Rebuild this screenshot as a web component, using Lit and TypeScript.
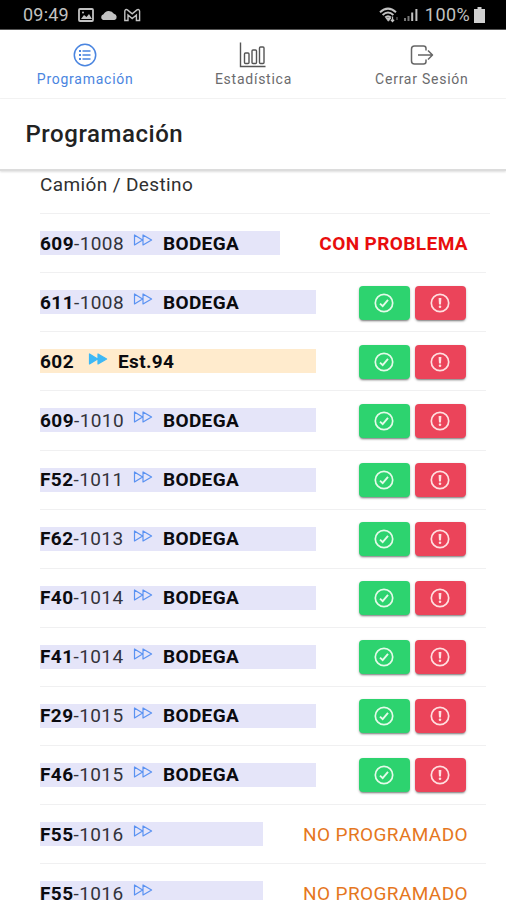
import { LitElement, html, css, svg, nothing } from "lit";
import { customElement, property } from "lit/decorators.js";

type Kind = "actions" | "problem" | "unscheduled";

interface Trip {
  truck: string;
  load?: string;
  target?: string;
  kind: Kind;
  warm?: boolean;
}

const trips: Trip[] = [
  { truck: "609", load: "-1008", target: "BODEGA", kind: "problem" },
  { truck: "611", load: "-1008", target: "BODEGA", kind: "actions" },
  { truck: "602", target: "Est.94", kind: "actions", warm: true },
  { truck: "609", load: "-1010", target: "BODEGA", kind: "actions" },
  { truck: "F52", load: "-1011", target: "BODEGA", kind: "actions" },
  { truck: "F62", load: "-1013", target: "BODEGA", kind: "actions" },
  { truck: "F40", load: "-1014", target: "BODEGA", kind: "actions" },
  { truck: "F41", load: "-1014", target: "BODEGA", kind: "actions" },
  { truck: "F29", load: "-1015", target: "BODEGA", kind: "actions" },
  { truck: "F46", load: "-1015", target: "BODEGA", kind: "actions" },
  { truck: "F55", load: "-1016", kind: "unscheduled" },
  { truck: "F55", load: "-1016", kind: "unscheduled" },
];

const ring = svg`<circle cx="10" cy="10" r="8.7" fill="none" stroke="currentColor" stroke-width="1.7"/>`;
const checkIcon = html`<svg width="20" height="20" viewBox="0 0 20 20">${ring}<path d="M6 10.6 8.7 13.2 14 6.9" fill="none" stroke="currentColor" stroke-width="1.9"/></svg>`;
const alertIcon = html`<svg width="20" height="20" viewBox="0 0 20 20">${ring}<path d="M8.600 5h2.800l-.4 6.400H9z" fill="currentColor"/><circle cx="10" cy="13.8" r="1.3" fill="currentColor"/></svg>`;

@customElement("trip-row")
export class TripRow extends LitElement {
  @property({ attribute: false }) trip!: Trip;

  static styles = css`
    :host { display: block; flex: none; height: 59.08px; box-sizing: border-box; padding-left: 40px; }
    .row { display: flex; align-items: center; height: 100%; width: 446px; box-sizing: border-box; border-bottom: 1px solid #f0f0f1; }
    .bar { display: flex; align-items: center; height: 24px; width: 276px; background: #e5e5f9; font-size: 19px; line-height: 26px; color: #0b0b10; white-space: nowrap; }
    .bar.problem { width: 240px; }
    .bar.unscheduled { width: 223px; }
    .bar.warm { background: #ffebcd; }
    .code { flex: none; width: 93px; letter-spacing: 0.42px; padding-top: 1px; }
    .code i { font-style: normal; color: #33333b; }
    .warm .code { width: 48px; }
    b { font-weight: 700; }
    .go { flex: none; width: 20px; height: 14px; margin-top: -6px; color: #5a92f2; }
    .warm .go { color: #3db8f5; margin-top: -5px; }
    .target { margin-left: 10px; letter-spacing: 0.35px; font-weight: 700; padding-top: 1px; }
    .actions { display: flex; gap: 5px; margin-left: 42.5px; margin-top: 0.8px; }
    button { display: flex; align-items: center; justify-content: center; width: 51px; height: 34px; padding: 0; border: 0; border-radius: 4px; color: #e4fbe9; background: #2dd36f; box-shadow: 0 2px 2px -1px #0006, 0 1px 3px #0003; }
    button.bad { color: #ffdfe0; background: #eb445a; }
    .status { flex: 1; text-align: right; margin-right: 18px; font-size: 19px; letter-spacing: 0.4px; line-height: 26px; padding-top: 1px; white-space: nowrap; }
    .status.problem { color: #e80d0d; font-weight: 700; }
    .status.unscheduled { color: #e5771e; }
  `;

  render() {
    const t = this.trip;
    return html`<div class="row">
      <div class="bar ${t.kind === "actions" ? "" : t.kind} ${t.warm ? "warm" : ""}">
        <span class="code"><b>${t.truck}</b>${t.load ? html`<i>${t.load}</i>` : nothing}</span>
        <svg class="go" viewBox="0 0 20 14" fill=${t.warm ? "currentColor" : "none"} stroke="currentColor" stroke-width="1.2" stroke-linejoin="round"><path d="M1.5 2v10L9.6 7zM10 2v10l8.6-5z"/></svg>
        ${t.target ? html`<span class="target">${t.target}</span>` : nothing}
      </div>
      ${t.kind === "actions"
        ? html`<div class="actions"><button>${checkIcon}</button><button class="bad">${alertIcon}</button></div>`
        : html`<div class="status ${t.kind}">${t.kind === "problem" ? "CON PROBLEMA" : "NO PROGRAMADO"}</div>`}
    </div>`;
  }
}

@customElement("app-root")
export class AppRoot extends LitElement {
  static styles = css`
    :host { display: flex; flex-direction: column; width: 506px; height: 900px; overflow: hidden; background: #fff; font-family: Roboto, sans-serif; }
    .statusbar { flex: none; height: 30px; box-sizing: border-box; display: flex; align-items: center; justify-content: space-between; padding: 0 21px 0 23px; background: #000; color: #c2c2c2; font-size: 18px; border-bottom: 1px solid #555; }
    .group { display: flex; align-items: center; }
    .time { width: 55px; letter-spacing: 0.2px; }
    .pct { margin: 0 4px 0 7px; letter-spacing: 0.4px; }
    .tabs { flex: none; display: flex; height: 69px; box-sizing: border-box; padding-left: 1px; border-bottom: 1px solid #f4f4f4; }
    .tab { flex: 1; display: flex; flex-direction: column; align-items: center; padding-top: 11px; color: #6b6b6d; font-size: 14px; letter-spacing: 0.75px; line-height: 18px; }
    .tab svg { margin-bottom: 1px; flex: none; }
    .tab.on { color: #4a85e0; }
    .head { flex: none; height: 72px; box-sizing: border-box; padding: 0 25.5px; line-height: 71px; font-size: 24px; font-weight: 500; letter-spacing: 0.55px; color: #222; border-bottom: 2px solid #dcdcdc; box-shadow: 0 1px 2px #0002; }
    .caption { flex: none; margin-left: 40px; width: 450px; height: 43.2px; box-sizing: border-box; line-height: 27px; font-size: 19px; letter-spacing: 0.38px; color: #303030; border-bottom: 1px solid #f0f0f1; }
  `;

  render() {
    return html`
      <div class="statusbar">
        <div class="group">
          <span class="time">09:49</span>
          <svg width="64" height="16" viewBox="0 0 64 16" fill="none" stroke="#c2c2c2">
            <rect x="1" y="2" width="14" height="12" rx="1" stroke-width="1.8"/>
            <path d="m3 12 3-4 2.5 2L11 7l3 5z" fill="#c2c2c2" stroke="none"/><circle cx="5" cy="5.5" r="1" fill="#c2c2c2" stroke="none"/>
            <path d="M26 13.5a3 3 0 0 1 .5-5.7 6 6 0 0 1 10.4-.5 3.2 3.2 0 0 1 .6 6.2z" fill="#c2c2c2" stroke="none" transform="translate(-1 -.5)"/>
            <path d="M46.8 13.5V4.3c0-1.7 1.5-2.3 2.6-1.4l4.8 4 4.8-4c1.1-.9 2.6-.3 2.6 1.4v9.2h-3.2V8l-4.2 3.5L50 8v5.5z" stroke-width="1.4"/>
          </svg>
        </div>
        <div class="group">
          <svg width="39" height="18" viewBox="0 0 39 18" fill="none" stroke="#c2c2c2">
            <path d="M1 6.2Q9 -1 17 6.2M3.6 9Q9 4 14.4 9M6.2 11.5Q9 9 11.8 11.5" stroke-width="2"/>
            <path d="m7 12 2.400 3.200 2.400-3.200z" fill="#c2c2c2" stroke-width="1"/>
            <path d="M13.500 10.500v5m-1.600-1.700 1.600 1.700 1.600-1.700" stroke-width="1.300"/><path d="M18 11v3" stroke="#777"/>
            <path d="M26 15v-3M29.5 15v-5" stroke="#777" stroke-width="2"/><path d="M33.2 15V6.5M37.4 15V3" stroke-width="2"/>
          </svg>
          <span class="pct">100%</span>
          <svg width="11" height="16" viewBox="0 0 11 16" fill="#d0d0d0"><path d="M3.5 0h4v2H11v14H0V2h3.500z"/></svg>
        </div>
      </div>
      <div class="tabs">
        <div class="tab on">
          <svg width="28" height="28" viewBox="0 0 28 28" fill="none" stroke="currentColor"><circle cx="14" cy="14" r="10.7" stroke-width="1.5"/><path d="M11.500 10h8M11.500 14h8M11.500 18h8" stroke-width="1.5"/><path d="M8 10h2M8 14h2M8 18h2" stroke-width="2"/></svg>
          Programación
        </div>
        <div class="tab">
          <svg width="28" height="28" viewBox="0 0 28 28" fill="none" stroke="#555" stroke-width="1.4"><path d="M1.500 1.500v24h25"/><rect x="5.500" y="12" width="4.500" height="10.500" rx="1"/><rect x="13" y="9" width="4.500" height="13.500" rx="1"/><rect x="20.500" y="6" width="4.500" height="16.500" rx="1"/></svg>
          Estadística
        </div>
        <div class="tab">
          <svg width="28" height="28" viewBox="0 0 28 28" fill="none" stroke="#666" stroke-width="1.5" stroke-linejoin="round"><path d="M18 9.500V7.500Q18 5 15.500 5H6.500Q3.500 5 3.500 8V20Q3.500 23 6.500 23H15.500Q18 23 18 20.500V18.500M10 14H24.500M20 9.500 24.500 14 20 18.500"/></svg>
          Cerrar Sesión
        </div>
      </div>
      <div class="head">Programación</div>
      <div class="caption">Camión / Destino</div>
      ${trips.map((t) => html`<trip-row .trip=${t}></trip-row>`)}
    `;
  }
}
